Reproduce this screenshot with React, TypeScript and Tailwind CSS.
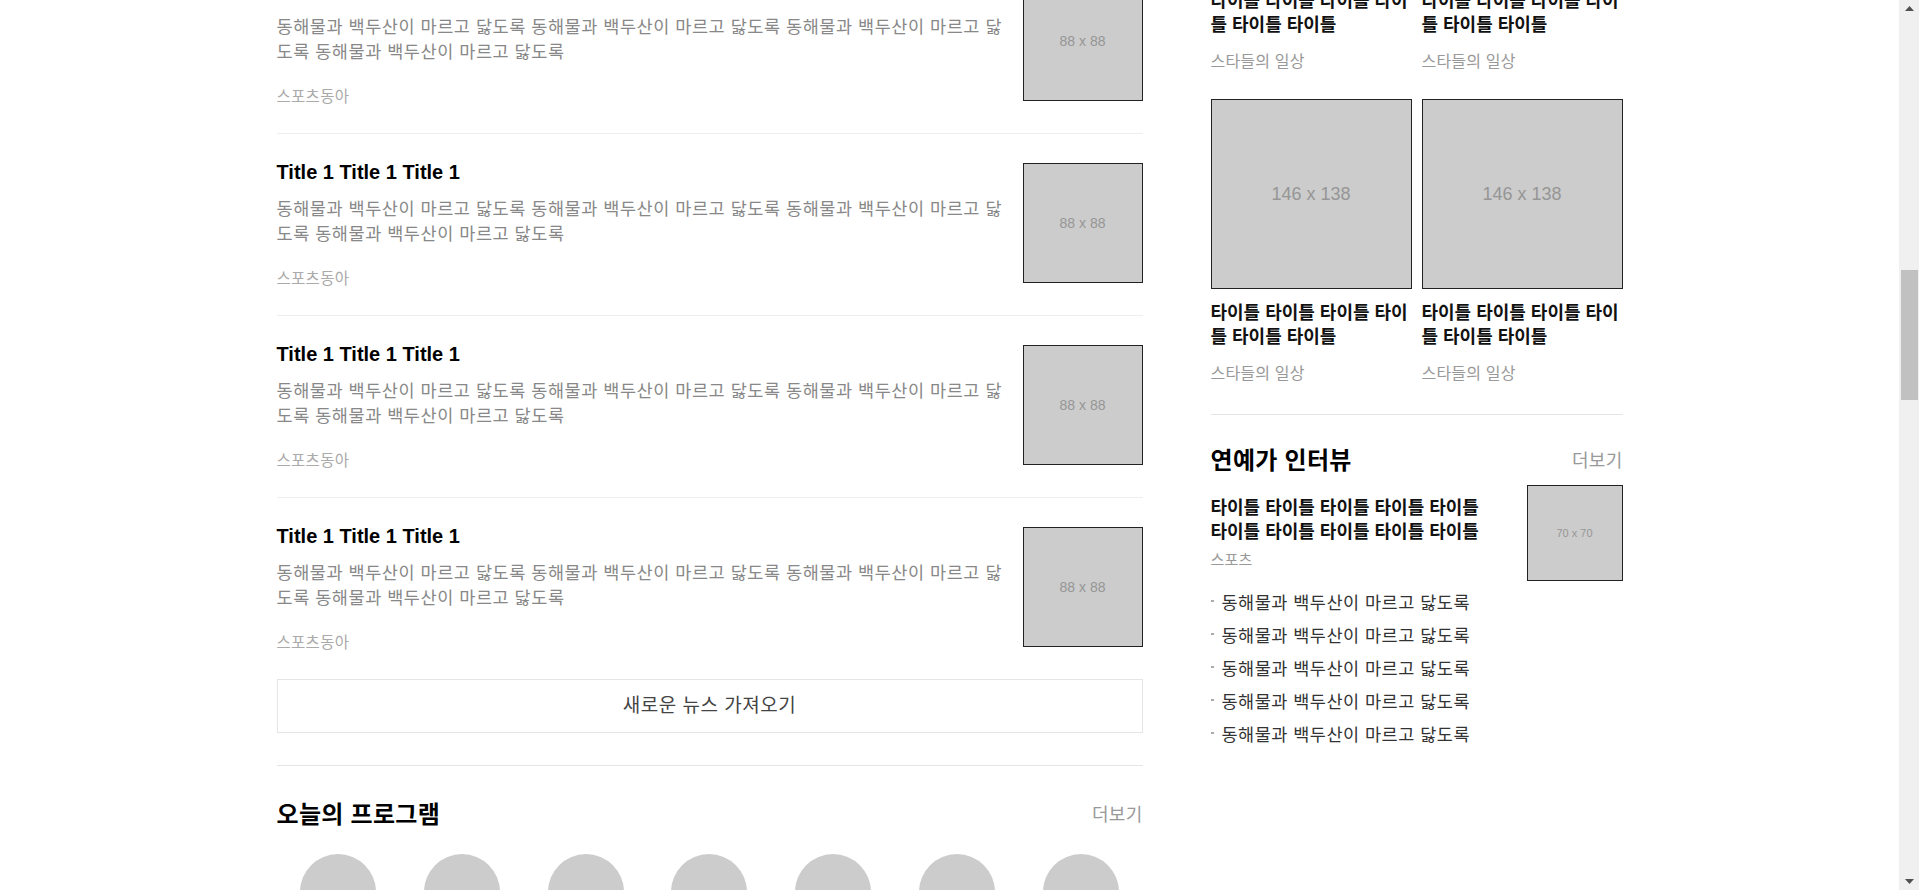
import { useLayoutEffect, useRef, useState } from "react";

const DESC =
  "동해물과 백두산이 마르고 닳도록 동해물과 백두산이 마르고 닳도록 동해물과 백두산이 마르고 닳도록 동해물과 백두산이 마르고 닳도록";
const SHORT = "동해물과 백두산이 마르고 닳도록";

// grey box with the size label, like a placeholder image
function Placeholder({ label, className }: { label: string; className: string }) {
  return (
    <div
      className={`flex shrink-0 items-center justify-center border border-[#222] bg-[#ccc] text-[#969696] ${className}`}
    >
      {label}
    </div>
  );
}

function SectionHead({ title }: { title: string }) {
  return (
    <div className="flex h-[30px] items-center justify-between">
      <h2 className="text-[24px] leading-[30px] font-bold tracking-[0.3px] text-black">{title}</h2>
      <a className="cursor-pointer text-[18px] leading-[30px] tracking-[0.3px] text-[#999]">더보기</a>
    </div>
  );
}

function NewsItem({ itemRef }: { itemRef?: React.Ref<HTMLLIElement> }) {
  return (
    <li ref={itemRef} className="flex justify-between border-t border-[#eee] pt-[28px] pb-[26px]">
      <div className="w-[732px]">
        <h3 className="text-[20px] leading-[20px] font-bold text-black">Title 1 Title 1 Title 1</h3>
        <p className="mt-[15px] text-[17.5px] leading-[25px] tracking-[0.55px] text-[#888]">{DESC}</p>
        <p className="mt-[22px] text-[15.5px] leading-[20px] tracking-[0.3px] text-[#aaa]">스포츠동아</p>
      </div>
      <Placeholder label="88 x 88" className="mt-px h-[120px] w-[120px] text-[14px]" />
    </li>
  );
}

function PhotoCard() {
  return (
    <div>
      <Placeholder label="146 x 138" className="h-[190px] w-full text-[18px]" />
      <p className="mt-3 text-[18px] leading-[24px] font-bold text-[#111]">
        타이틀 타이틀 타이틀 타이틀 타이틀 타이틀
      </p>
      <p className="mt-[15px] text-[16px] leading-[20px] tracking-[0.2px] text-[#999]">스타들의 일상</p>
    </div>
  );
}

function Arrow({ down }: { down?: boolean }) {
  return (
    <div className="flex h-[17px] items-center justify-center">
      <svg width="9" height="5" viewBox="0 0 9 5" className={down ? "rotate-180" : ""}>
        <polygon points="0,5 4.5,0 9,5" fill="#505050" />
      </svg>
    </div>
  );
}

export default function App() {
  const scrollRef = useRef<HTMLDivElement>(null);
  const anchorRef = useRef<HTMLLIElement>(null);
  const [thumb, setThumb] = useState({ top: 17, height: 130 });

  const updateThumb = () => {
    const sc = scrollRef.current;
    if (!sc) return;
    const track = sc.clientHeight - 34;
    const h = Math.max(17, (track * sc.clientHeight) / sc.scrollHeight);
    const max = sc.scrollHeight - sc.clientHeight;
    const top = 17 + (max > 0 ? ((track - h) * sc.scrollTop) / max : 0);
    setThumb({ top, height: h });
  };

  // open the page scrolled down to the news list
  useLayoutEffect(() => {
    const sc = scrollRef.current;
    const a = anchorRef.current;
    if (!sc || !a) return;
    const top = a.getBoundingClientRect().top - sc.getBoundingClientRect().top + sc.scrollTop;
    sc.scrollTop = top - 133;
    updateThumb();
  }, []);

  const programs = ["런닝맨", "1박 2일", "놀면 뭐하니", "나 혼자 산다", "전지적 참견", "복면가왕", "아는 형님"];

  return (
    <div className="flex h-screen bg-white font-['Liberation_Sans','Noto_Sans_CJK_KR',sans-serif] text-black">
      <div
        ref={scrollRef}
        onScroll={updateThumb}
        className="flex-1 overflow-y-scroll [scrollbar-width:none] [&::-webkit-scrollbar]:hidden"
      >
        {/* header */}
        <header className="border-b border-[#e5e5e5]">
          <div className="mx-auto flex h-[40px] w-[1346px] items-center justify-end gap-4 text-[13px] text-[#999]">
            <span>로그인</span>
            <span>회원가입</span>
            <span>고객센터</span>
          </div>
          <div className="mx-auto flex h-[86px] w-[1346px] items-center gap-12">
            <span className="text-[30px] font-bold text-[#1a3c8c]">스포츠동아</span>
            <nav className="flex gap-8 text-[17px] font-bold text-[#333]">
              <span>야구</span>
              <span>축구</span>
              <span>농구·배구</span>
              <span>골프</span>
              <span>연예</span>
              <span>방송</span>
            </nav>
          </div>
        </header>

        <main className="mx-auto flex w-[1346px] items-start gap-[68px] pt-[60px] pb-[80px]">
          {/* left column */}
          <div className="w-[866px]">
            <div className="mb-[10px]">
              <SectionHead title="최신 뉴스" />
            </div>
            <ul>
              {Array.from({ length: 12 }).map((_, i) => (
                <NewsItem key={i} itemRef={i === 9 ? anchorRef : undefined} />
              ))}
            </ul>
            <button className="h-[54px] w-full border border-[#e5e5e5] text-[19px] tracking-[0.5px] text-[#444]">
              새로운 뉴스 가져오기
            </button>

            <section className="mt-[32px] border-t border-[#e5e5e5] pt-[34px]">
              <SectionHead title="오늘의 프로그램" />
              <div className="mt-[24px] grid grid-cols-7">
                {programs.map((p) => (
                  <div key={p} className="flex flex-col items-center">
                    <div className="h-[76px] w-[76px] rounded-full bg-[#ccc]" />
                    <p className="mt-[10px] text-[15px] leading-[20px] text-[#333]">{p}</p>
                  </div>
                ))}
              </div>
            </section>

            <section className="mt-[50px] border-t border-[#e5e5e5] pt-[34px]">
              <div className="mb-[10px]">
                <SectionHead title="연예 뉴스" />
              </div>
              <ul>
                {Array.from({ length: 14 }).map((_, i) => (
                  <NewsItem key={i} />
                ))}
              </ul>
              <button className="h-[54px] w-full border border-[#e5e5e5] text-[19px] tracking-[0.5px] text-[#444]">
                새로운 뉴스 가져오기
              </button>
            </section>
          </div>

          {/* right column */}
          <aside className="w-[412px]">
            <div className="mb-[64px] flex h-[250px] items-center justify-center bg-[#f4f4f4] text-[14px] text-[#bbb]">
              AD
            </div>

            <section className="border-t border-[#e5e5e5] pt-[31px] pb-[30px]">
              <SectionHead title="스타 포토" />
              <div className="mt-[20px] grid grid-cols-2 gap-x-[10px] gap-y-[27px]">
                {Array.from({ length: 10 }).map((_, i) => (
                  <PhotoCard key={i} />
                ))}
              </div>
            </section>

            <section className="border-t border-[#e5e5e5] pt-[31px] pb-[40px]">
              <SectionHead title="연예가 인터뷰" />
              <div className="mt-[9px] flex items-center justify-between">
                <div className="w-[280px]">
                  <p className="text-[18px] leading-[24px] font-bold text-[#111]">
                    타이틀 타이틀 타이틀 타이틀 타이틀 타이틀 타이틀 타이틀 타이틀 타이틀
                  </p>
                  <p className="mt-[6px] text-[15px] leading-[20px] tracking-[0.2px] text-[#999]">스포츠</p>
                </div>
                <Placeholder label="70 x 70" className="h-[96px] w-[96px] text-[11px]" />
              </div>
              <ul className="mt-[6px]">
                {Array.from({ length: 5 }).map((_, i) => (
                  <li key={i} className="flex text-[17.5px] leading-[33px] tracking-[0.5px] text-[#333]">
                    <span className="mt-[13px] mr-[8px] h-[2px] w-[3px] shrink-0 bg-[#aaa]" />
                    {SHORT}
                  </li>
                ))}
              </ul>
            </section>
          </aside>
        </main>

        <footer className="h-[362px] border-t border-[#e5e5e5] bg-[#f7f7f7]">
          <div className="mx-auto w-[1346px] pt-[40px] text-[13px] leading-[22px] text-[#999]">
            <p className="text-[15px] font-bold text-[#666]">스포츠동아</p>
            <p className="mt-2">회사소개 · 광고안내 · 이용약관 · 개인정보처리방침 · 청소년보호정책</p>
            <p>Copyright by sports.donga.com. All rights reserved.</p>
          </div>
        </footer>
      </div>

      {/* scrollbar */}
      <div className="relative flex w-[20px] shrink-0 flex-col justify-between bg-[#f0f0f0]">
        <Arrow />
        <div
          className="absolute right-[1px] left-[2px] bg-[#c1c1c1]"
          style={{ top: thumb.top, height: thumb.height }}
        />
        <Arrow down />
      </div>
    </div>
  );
}
